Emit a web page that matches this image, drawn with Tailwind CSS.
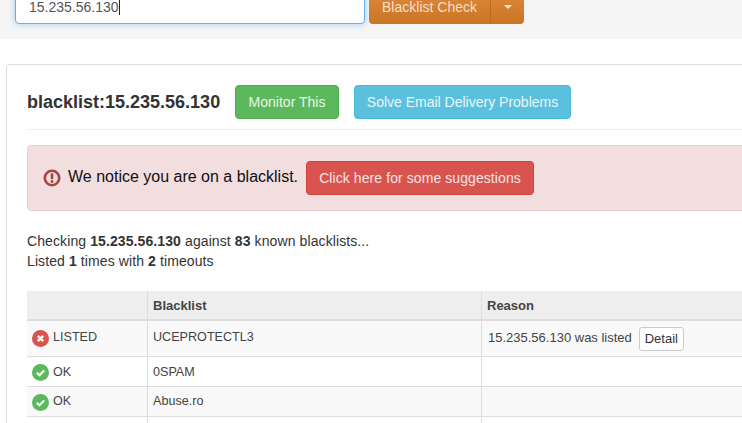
<!DOCTYPE html>
<html><head><meta charset="utf-8"><script src="https://cdn.jsdelivr.net/npm/@tailwindcss/browser@4"></script></head>
<body class="w-[742px] h-[423px] overflow-hidden bg-white font-['Liberation_Sans',sans-serif] text-[#333] text-[12px]">
<div class="h-[39px] bg-[#f5f5f5] pl-[15px] flex items-end pb-[15px] gap-[4px]">
  <div class="w-[350px] h-[34px] shrink-0 bg-white border border-[#66afe9] rounded-b-[4px] shadow-[0_0_6px_rgba(102,175,233,.6)] flex items-center pl-[13px] text-[14px] text-[#555]"><span>15.235.56.130</span><span class="w-px h-[15px] bg-[#222]"></span></div>
  <div class="h-[34px] flex shrink-0 rounded-b-[4px] overflow-hidden bg-gradient-to-b from-[#e0893a] to-[#c97524] text-white/75 text-[14px]">
    <div class="w-[122px] flex items-center justify-center border-r border-[#b96d1f]">Blacklist Check</div>
    <div class="w-[33px] flex items-center justify-center"><span class="w-0 h-0 border-x-[4px] border-x-transparent border-t-[4px] border-t-white/80"></span></div>
  </div>
</div>
<div class="ml-[6px] mt-[25px] w-[760px] h-[400px] border border-[#ddd] rounded-[4px] pl-[20px] pt-[20px]">
  <div class="w-[730px] h-[45px] border-b border-[#eee] flex items-start">
    <h1 class="text-[18px] leading-[34px] font-bold text-[#333] w-[208px] shrink-0">blacklist:15.235.56.130</h1>
    <div class="h-[34px] w-[104px] shrink-0 bg-[#5cb85c] border border-[#4cae4c] rounded-[4px] text-white/85 text-[14px] flex items-center justify-center">Monitor This</div>
    <div class="ml-[15px] h-[34px] w-[217px] shrink-0 bg-[#5bc0de] border border-[#46b8da] rounded-[4px] text-white/85 text-[14px] flex items-center justify-center">Solve Email Delivery Problems</div>
  </div>
  <div class="mt-[15px] w-[730px] h-[66px] bg-[#f2dede] border border-[#ebccd1] rounded-[4px] flex items-center pl-[15px]">
    <svg class="w-[18px] h-[18px] shrink-0" viewBox="0 0 18 18"><circle cx="9" cy="9" r="7.2" fill="none" stroke="#a94442" stroke-width="2.6"/><rect x="7.7" y="4.2" width="2.6" height="6" rx="1" fill="#a94442"/><circle cx="9" cy="12.6" r="1.5" fill="#a94442"/></svg>
    <span class="ml-[7px] text-[16px] text-[#111] w-[238px] shrink-0 -mt-[3px]">We notice you are on a blacklist.</span>
    <div class="h-[34px] w-[228px] shrink-0 bg-[#d9534f] border border-[#d43f3a] rounded-[4px] text-white/85 text-[14px] tracking-[0.08px] flex items-center justify-center">Click here for some suggestions</div>
  </div>
  <div class="mt-[20px] text-[14px] tracking-[0.1px] leading-[20px] text-[#333]">
    <div>Checking <b>15.235.56.130</b> against <b>83</b> known blacklists...</div>
    <div>Listed <b>1</b> times with <b>2</b> timeouts</div>
  </div>
  <div class="mt-[20px] w-[730px] grid grid-cols-[121px_334px_275px] text-[12.6px] text-[#444]">
    <div class="h-[30px] bg-[#eee] border-b-2 border-r border-[#ddd]"></div>
    <div class="h-[30px] bg-[#eee] border-b-2 border-r border-[#ddd] pl-[5px] font-bold text-[13px] leading-[30px]">Blacklist</div>
    <div class="h-[30px] bg-[#eee] border-b-2 border-[#ddd] pl-[5px] font-bold text-[13px] leading-[30px]">Reason</div>

    <div class="h-[36px] bg-[#f9f9f9] border-b border-r border-[#ddd] pl-[5px] flex items-center gap-[4px]">
      <svg class="w-[17px] h-[17px] shrink-0 -mt-[1px]" viewBox="0 0 17 17"><circle cx="8.5" cy="8.5" r="8.5" fill="#d9534f"/><path d="M5.8 5.8l5.4 5.4M11.2 5.8l-5.4 5.4" stroke="#fff" stroke-width="2.4"/></svg><span class="-mt-[2px]">LISTED</span></div>
    <div class="h-[36px] bg-[#f9f9f9] border-b border-r border-[#ddd] pl-[5px] flex items-center"><span class="-mt-[2px]">UCEPROTECTL3</span></div>
    <div class="h-[36px] bg-[#f9f9f9] border-b border-[#ddd] pl-[6px] flex items-center text-[13px]"><span class="-mt-[1px]">15.235.56.130 was listed</span><span class="ml-[7px] w-[45px] h-[24px] bg-white border border-[#ccc] rounded-[3px] flex items-center justify-center text-[#333]">Detail</span></div>

    <div class="h-[30px] border-b border-r border-[#ddd] pl-[5px] flex items-center gap-[4px]">
      <svg class="w-[17px] h-[17px] shrink-0 mt-[2px]" viewBox="0 0 17 17"><circle cx="8.5" cy="8.5" r="8.5" fill="#5cb85c"/><path d="M4.8 8.8l2.6 2.5 4.8-4.8" fill="none" stroke="#fff" stroke-width="2.2"/></svg><span class="mt-[1px]">OK</span></div>
    <div class="h-[30px] border-b border-r border-[#ddd] pl-[5px] flex items-center"><span class="mt-[1px]">0SPAM</span></div>
    <div class="h-[30px] border-b border-[#ddd]"></div>

    <div class="h-[30px] bg-[#f9f9f9] border-b border-r border-[#ddd] pl-[5px] flex items-center gap-[4px]">
      <svg class="w-[17px] h-[17px] shrink-0 mt-[2px]" viewBox="0 0 17 17"><circle cx="8.5" cy="8.5" r="8.5" fill="#5cb85c"/><path d="M4.8 8.8l2.6 2.5 4.8-4.8" fill="none" stroke="#fff" stroke-width="2.2"/></svg><span class="-mt-[1px]">OK</span></div>
    <div class="h-[30px] bg-[#f9f9f9] border-b border-r border-[#ddd] pl-[5px] flex items-center"><span class="-mt-[1px]">Abuse.ro</span></div>
    <div class="h-[30px] bg-[#f9f9f9] border-b border-[#ddd]"></div>

    <div class="h-[6px] border-r border-[#ddd]"></div><div class="h-[6px] border-r border-[#ddd]"></div><div></div>
  </div>
</div>
</body></html>
